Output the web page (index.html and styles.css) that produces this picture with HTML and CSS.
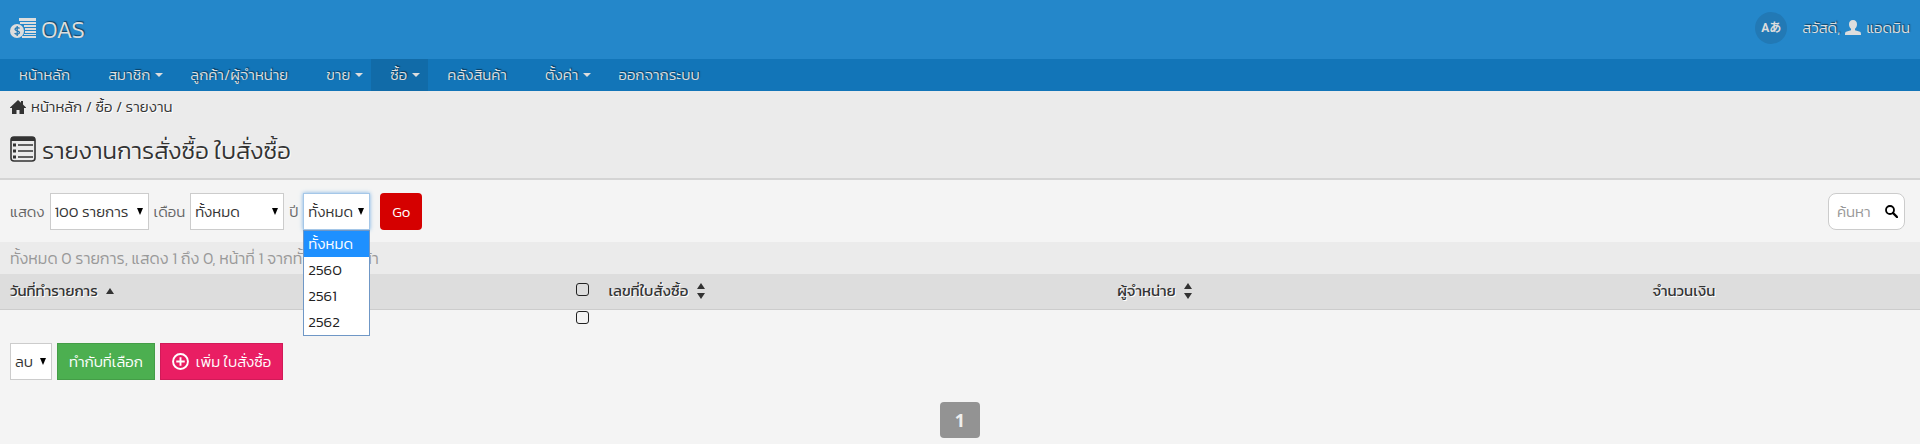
FILE: index.html
```html
<!DOCTYPE html>
<html lang="th">
<head>
  <meta charset="UTF-8">
  <meta name="viewport" content="width=device-width, initial-scale=1">
  <title>รายงานการสั่งซื้อ ใบสั่งซื้อ</title>
  <link rel="stylesheet" href="styles.css">
</head>
<body>

  <header class="header">
    <a class="logo" href="#">
      <svg width="27" height="22" viewBox="0 0 27 22" aria-hidden="true">
        <path d="M9 1h17v3H9zM10 5h16v2H10zM14 8h12v2H14zM15 11h11v2H15zM15 14h11v2H15zM14 17h12v1H14zM12 19h14v2H12z" fill="#ddd"/>
        <circle cx="7" cy="14" r="7" fill="#ddd"/>
        <path d="M9.500 11.500C9 10.500 5 10.200 5 12.300c0 2 4.500 1.200 4.500 3.300 0 2-4 2-4.800.5M7.200 9v10" fill="none" stroke="#2279b5" stroke-width="1.300"/>
      </svg>
      <span>OAS</span>
    </a>
    <div class="user">
      <button class="lang" type="button">Aあ</button>
      <span>สวัสดี,</span>
      <a href="#">
        <svg width="16" height="15" viewBox="0 0 16 15" aria-hidden="true">
          <path d="M8 0c2.600 0 4 1.800 4 4.300 0 1.900-.9 3.600-2 4.500v1.400l5 1.600c.7.300 1 1 1 3.200H0c0-2.200.3-2.900 1-3.200l5-1.600V8.800C4.900 7.900 4 6.200 4 4.300 4 1.800 5.400 0 8 0z" fill="#ddd"/>
        </svg>
        <span>แอดมิน</span>
      </a>
    </div>
  </header>

  <nav class="menu">
    <a href="#">หน้าหลัก</a>
    <a class="sub" href="#">สมาชิก</a>
    <a href="#">ลูกค้า/ผู้จำหน่าย</a>
    <a class="sub" href="#">ขาย</a>
    <a class="sub active" href="#">ซื้อ</a>
    <a href="#">คลังสินค้า</a>
    <a class="sub" href="#">ตั้งค่า</a>
    <a href="#">ออกจากระบบ</a>
  </nav>

  <main>
    <div class="title-bar">
      <div class="breadcrumb">
        <svg width="16" height="14" viewBox="0 0 16 14" aria-hidden="true">
          <path d="M8 0l3 2.800V1h2v3.600L16 7.500V8h-2v6H9.500v-4h-3v4H2V8H0v-.5z" fill="#333"/>
        </svg>
        <span><a href="#">หน้าหลัก</a> / <a href="#">ซื้อ</a> / <a href="#">รายงาน</a></span>
      </div>
      <h1>
        <svg width="26" height="26" viewBox="0 0 26 26" aria-hidden="true">
          <rect x="1" y="1" width="24" height="24" rx="3" fill="none" stroke="#333" stroke-width="1.600"/>
          <path d="M1 5V3q0-2 2-2h20q2 0 2 2v2z" fill="#333"/>
          <path d="M8 9h15M8 15h15M8 21h15" stroke="#333" stroke-width="1.400"/>
          <path d="M3 7.500h3v3H3zM3 13.500h3v3H3zM3 19.500h3v3H3z" fill="#333"/>
        </svg>
        <span>รายงานการสั่งซื้อ ใบสั่งซื้อ</span>
      </h1>
    </div>

    <form class="toolbar">
      <label for="count">แสดง</label>
      <span class="select count">
        <select id="count"><option>100 รายการ</option></select>
      </span>
      <label for="month">เดือน</label>
      <span class="select month">
        <select id="month"><option>ทั้งหมด</option></select>
      </span>
      <label for="year">ปี</label>
      <span class="select year">
        <select id="year">
          <option>ทั้งหมด</option>
          <option>2560</option>
          <option>2561</option>
          <option>2562</option>
        </select>
        <ul class="options">
          <li class="selected">ทั้งหมด</li>
          <li>2560</li>
          <li>2561</li>
          <li>2562</li>
        </ul>
      </span>
      <button class="go" type="submit">Go</button>
      <div class="search">
        <input type="text" placeholder="ค้นหา" aria-label="ค้นหา">
        <button type="submit" aria-label="ค้นหา">
          <svg width="13" height="13" viewBox="0 0 13 13" aria-hidden="true">
            <circle cx="5" cy="5" r="4" fill="none" stroke="#000" stroke-width="1.800"/>
            <path d="M8 8l4 4" stroke="#000" stroke-width="2.400" stroke-linecap="round"/>
          </svg>
        </button>
      </div>
    </form>

    <p class="summary">ทั้งหมด 0 รายการ, แสดง 1 ถึง 0, หน้าที่ 1 จากทั้งหมด 1 หน้า</p>

    <table class="data">
      <thead>
        <tr>
          <th class="col-date">วันที่ทำรายการ <i class="sort asc"></i></th>
          <th class="col-check"><input type="checkbox" aria-label="เลือกทั้งหมด"></th>
          <th class="col-order">เลขที่ใบสั่งซื้อ <i class="sort asc desc"></i></th>
          <th class="col-supplier">ผู้จำหน่าย <i class="sort asc desc"></i></th>
          <th class="col-total">จำนวนเงิน</th>
        </tr>
      </thead>
      <tbody>
        <tr>
          <td></td>
          <td class="col-check"><input type="checkbox" aria-label="เลือก"></td>
          <td></td>
          <td></td>
          <td></td>
        </tr>
      </tbody>
    </table>

    <div class="actions">
      <span class="select action">
        <select aria-label="ทำกับที่เลือก"><option>ลบ</option></select>
      </span>
      <button class="btn green" type="button">ทำกับที่เลือก</button>
      <button class="btn pink" type="button">
        <svg width="17" height="17" viewBox="0 0 16 16" aria-hidden="true">
          <circle cx="8" cy="8" r="7" fill="none" stroke="#fff" stroke-width="1.800"/>
          <path d="M8 4v8M4 8h8" stroke="#fff" stroke-width="1.800"/>
        </svg>
        เพิ่ม ใบสั่งซื้อ
      </button>
    </div>

    <div class="pager">
      <a href="#">1</a>
    </div>
  </main>

</body>
</html>
```
FILE: styles.css
```css
* {
  box-sizing: border-box;
  margin: 0;
  padding: 0;
}

body {
  font-family: Kanit, Athiti, "Noto Sans Thai", Roboto, "Noto Sans", sans-serif;
  font-size: 15px;
  font-weight: 300;
  line-height: 24px;
  color: #333;
  background: #f4f4f4;
}

a {
  color: inherit;
  text-decoration: none;
}

button,
input,
select {
  font: inherit;
  color: inherit;
}

button {
  border: none;
  cursor: pointer;
}

/* Header */
.header {
  display: flex;
  justify-content: space-between;
  align-items: center;
  height: 59px;
  padding: 0 10px 4px;
  color: #ddd;
  background: #2487ca;
  text-shadow: 1px -1px 1px rgba(0, 0, 0, 0.5);
}

.logo {
  display: flex;
  align-items: center;
  gap: 4px;
  font-size: 24px;
}

.logo span {
  padding-top: 4px;
}

.user,
.user a {
  display: flex;
  align-items: center;
  gap: 5px;
}

.lang {
  width: 32px;
  height: 32px;
  margin-right: 10px;
  border-radius: 50%;
  font-family: Roboto, "Noto Sans CJK JP", sans-serif;
  font-size: 12px;
  font-weight: 700;
  color: #ddd;
  background: #2279b5;
}

/* Menu */
.menu {
  display: flex;
  height: 32px;
  line-height: 32px;
  color: #ddd;
  background: #1275b8;
  text-shadow: 1px -1px 1px rgba(0, 0, 0, 0.5);
}

.menu a {
  display: flex;
  align-items: center;
  gap: 5px;
  padding: 0 19px;
}

.menu .sub {
  padding-right: 8px;
}

.sub::after {
  content: "";
  border: 4px solid transparent;
  border-top-color: #ddd;
  border-bottom: none;
}

.menu .active {
  background: #116ba8;
}

/* Title */
.title-bar {
  padding: 4px 10px 11px;
  border-bottom: 2px solid #d4d4d4;
  background: #ebebeb;
  text-shadow: 1px 1px #fff;
}

.breadcrumb {
  display: flex;
  align-items: center;
  gap: 5px;
}

h1 {
  display: flex;
  align-items: center;
  gap: 6px;
  height: 36px;
  margin-top: 12px;
  font-size: 24px;
  font-weight: 300;
}

h1 span {
  padding-top: 4px;
}

/* Filters */
.toolbar {
  display: flex;
  align-items: center;
  gap: 5px;
  padding: 13px 15px 12px 10px;
}

.toolbar label {
  color: #666;
}

.select {
  position: relative;
  display: inline-block;
  height: 37px;
}

.select::after {
  content: "";
  position: absolute;
  top: 15px;
  right: 6px;
  border: 3px solid transparent;
  border-top: 7px solid #000;
  border-bottom: none;
  pointer-events: none;
}

.select select {
  width: 100%;
  height: 37px;
  padding: 0 4px;
  border: 1px solid #ccc;
  background: #fff;
  appearance: none;
}

.count {
  width: 99px;
}

.month {
  width: 94px;
}

.year {
  width: 67px;
}

.action {
  width: 42px;
}

.year select {
  border-color: #a5c7e8;
  box-shadow: 0 0 4px #7db4e6;
}

.options {
  position: absolute;
  top: 37px;
  left: 0;
  z-index: 1;
  width: 100%;
  border: 1px solid #6f97c6;
  list-style: none;
  color: #222;
  background: #fff;
}

.options li {
  height: 26px;
  padding: 0 4px;
  line-height: 26px;
}

.options .selected {
  color: #fff;
  background: #1e90ff;
}

.go {
  width: 42px;
  height: 37px;
  margin-left: 5px;
  border-radius: 4px;
  color: #fff;
  background: #d50000;
}

.search {
  display: flex;
  align-items: center;
  width: 77px;
  height: 37px;
  margin-left: auto;
  padding: 0 6px 0 8px;
  border: 1px solid #ccc;
  border-radius: 8px;
  background: #fff;
}

.search input {
  flex: 1;
  min-width: 0;
  border: none;
  background: none;
}

.search input::placeholder {
  color: #999;
}

.search button {
  display: flex;
  background: none;
}

.summary {
  height: 32px;
  padding: 0 10px;
  font-size: 16px;
  line-height: 32px;
  color: #999;
  background: #ebebeb;
}

/* Table */
.data {
  width: 100%;
  border-collapse: collapse;
  table-layout: fixed;
}

.data th {
  height: 35px;
  padding: 0 10px;
  border-bottom: 1px solid #ccc;
  font-weight: 400;
  text-align: left;
  background: #ddd;
  text-shadow: 1px 1px #fff;
}

.data td {
  height: 21px;
  vertical-align: top;
}

.data input {
  display: block;
  width: 13px;
  height: 13px;
  margin: 0 auto;
  border: 1px solid #222;
  border-radius: 3px;
  appearance: none;
}

.col-date {
  width: 29.5%;
}

.col-check {
  width: 32px;
}

.col-order {
  width: 26.5%;
}

.data .col-check {
  padding: 1px 0 4px;
}

.data .col-total {
  width: 24.6%;
  text-align: center;
}

.sort {
  display: inline-flex;
  flex-direction: column;
  gap: 4px;
  margin: 0 0 4px 5px;
  vertical-align: middle;
}

.asc::before,
.desc::after {
  content: "";
  border: 4px solid transparent;
}

.asc::before {
  border-top: none;
  border-bottom: 6px solid #333;
}

.desc::after {
  border-top: 6px solid #333;
  border-bottom: none;
}

/* Actions */
.actions {
  display: flex;
  gap: 5px;
  padding: 13px 10px;
}

.btn {
  display: flex;
  align-items: center;
  gap: 7px;
  height: 37px;
  padding: 0 11px;
  border: 1px solid rgba(0, 0, 0, 0.1);
  color: #fff;
}

.green {
  background: #4caf50;
}

.pink {
  background: #e91e63;
}

.pager {
  display: flex;
  justify-content: center;
  padding: 9px 0 6px;
}

.pager a {
  width: 40px;
  height: 36px;
  border-radius: 4px;
  font-family: "Open Sans", sans-serif;
  font-size: 18px;
  font-weight: 700;
  line-height: 36px;
  text-align: center;
  color: #eee;
  background: #939393;
}
```
